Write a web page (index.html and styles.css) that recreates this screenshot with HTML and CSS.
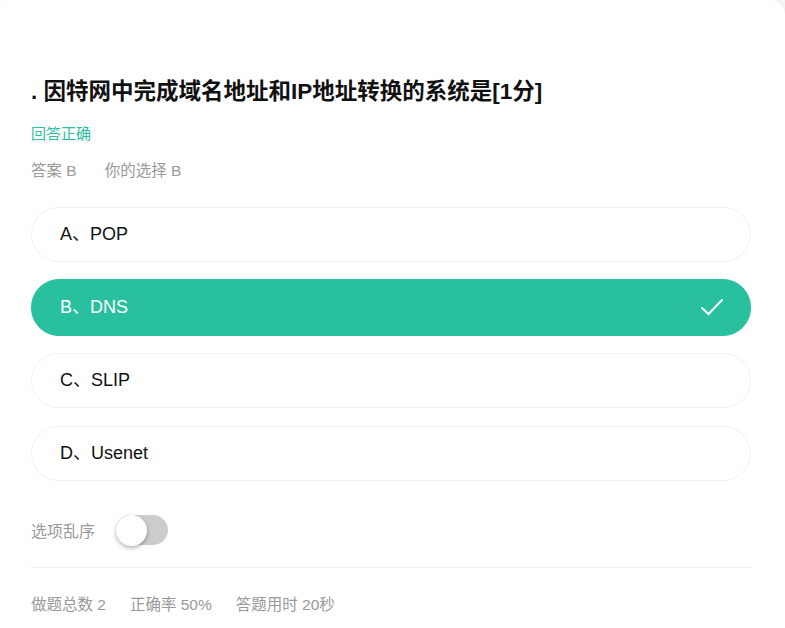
FILE: index.html
```html
<!DOCTYPE html>
<html lang="zh-CN">
<head>
    <meta charset="UTF-8">
    <meta name="viewport" content="width=device-width, initial-scale=1.0">
    <title>答题结果</title>
    <link rel="stylesheet" href="styles.css">
</head>
<body>
    <div class="card">
        <h2 class="question">. 因特网中完成域名地址和IP地址转换的系统是[1分]</h2>
        <p class="status">回答正确</p>
        <p class="answer"><span>答案 B</span><span>你的选择 B</span></p>

        <ul class="options">
            <li class="option">A、POP</li>
            <li class="option selected">
                B、DNS
                <svg class="check" width="24" height="20" viewBox="0 0 24 20">
                    <path d="M1.5 10.5 L8.5 17 L22.5 2.5" fill="none" stroke="#fff" stroke-width="2"/>
                </svg>
            </li>
            <li class="option">C、SLIP</li>
            <li class="option">D、Usenet</li>
        </ul>

        <div class="shuffle">
            <span>选项乱序</span>
            <div class="toggle"><div class="knob"></div></div>
        </div>

        <div class="stats">
            <span>做题总数 2</span>
            <span>正确率 50%</span>
            <span>答题用时 20秒</span>
        </div>
    </div>
</body>
</html>
```

FILE: styles.css
```css
body {
    margin: 0;
    background-color: #f4f4f4;
    font-family: "Liberation Sans", "Noto Sans CJK SC", sans-serif;
    color: #222;
}
.card {
    background: #fff;
    min-height: 628px;
    border-radius: 3px 16px 0 0;
    padding: 77px 34px 0 31px;
    box-sizing: border-box;
}
.question {
    margin: 0;
    font-size: 22.5px;
    line-height: 30px;
    font-weight: bold;
    color: #111;
}
.status {
    margin: 17px 0 0;
    font-size: 15px;
    line-height: 20px;
    color: #29c0a0;
}
.answer {
    margin: 17px 0 0;
    font-size: 15.5px;
    line-height: 20px;
    color: #999;
}
.answer span + span {
    margin-left: 28px;
}
.options {
    list-style: none;
    margin: 26px 0 0;
    padding: 0;
    display: flex;
    flex-direction: column;
    gap: 18px;
}
.option {
    height: 55px;
    box-sizing: border-box;
    border: 1px solid #f0f0f0;
    border-radius: 28px;
    padding: 0 28px 5px;
    display: flex;
    align-items: center;
    justify-content: space-between;
    font-size: 18px;
    color: #111;
}
.option.selected {
    background-color: #29c0a0;
    border-color: #29c0a0;
    color: #fff;
    height: 57px;
    margin: -1px 0;
}
.check {
    margin-right: -2px;
    margin-top: 4px;
}
.shuffle {
    margin-top: 34px;
    display: flex;
    align-items: center;
    font-size: 16px;
    color: #999;
    padding-bottom: 22px;
    border-bottom: 1px solid #eee;
}
.toggle {
    margin-left: 21px;
    width: 52px;
    height: 30px;
    border-radius: 15px;
    background: #ccc;
    position: relative;
}
.knob {
    position: absolute;
    left: 0;
    top: 0;
    width: 31px;
    height: 31px;
    border-radius: 50%;
    background: #fff;
    box-shadow: 0 2px 4px rgba(0, 0, 0, 0.3);
}
.stats {
    margin-top: 27px;
    font-size: 15.5px;
    line-height: 20px;
    color: #999;
    display: flex;
    gap: 24px;
}
```
